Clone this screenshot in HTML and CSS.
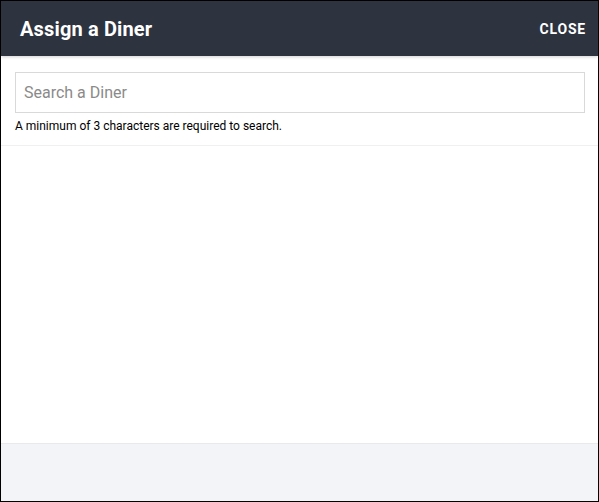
FILE: index.html
```html
<!DOCTYPE html>
<html>
<head>
<meta charset="utf-8">
<link rel="stylesheet" href="styles.css">
</head>
<body>
<div class="modal">
  <header class="modal-header">
    <h1 class="title">Assign a Diner</h1>
    <button class="close">CLOSE</button>
  </header>
  <div class="search-area">
    <input class="search-input" type="text" placeholder="Search a Diner">
    <p class="hint">A minimum of 3 characters are required to search.</p>
  </div>
  <div class="results"></div>
  <footer class="modal-footer"></footer>
</div>
</body>
</html>
```
FILE: styles.css
```css
* { box-sizing: border-box; }
html, body { margin: 0; padding: 0; }
body { font-family: Roboto, "Liberation Sans", Arial, sans-serif; background: #fff; }
.modal {
  width: 599px;
  height: 502px;
  border: 1px solid #000;
  display: flex;
  flex-direction: column;
  background: #fff;
}
.modal-header {
  height: 55px;
  background: #2d333f;
  display: flex;
  align-items: center;
  justify-content: space-between;
  padding: 0 12px 0 19px;
  box-shadow: 0 1px 3px rgba(0,0,0,0.18);
  position: relative;
  z-index: 1;
  flex: none;
}
.title {
  margin: 0;
  color: #fff;
  font-size: 20px;
  font-weight: 700;
  letter-spacing: 0.15px;
}
.close {
  background: none;
  border: 0;
  padding: 0;
  color: #fff;
  font-family: inherit;
  font-size: 14px;
  font-weight: 700;
  letter-spacing: 0.8px;
  cursor: pointer;
}
.search-area {
  padding: 16px 13px 12px 14px;
  border-bottom: 1px solid #f0f0f0;
  flex: none;
}
.search-input {
  display: block;
  width: 100%;
  height: 41px;
  border: 1px solid #d9d9d9;
  padding: 0 8px;
  font-family: inherit;
  font-size: 16px;
  color: #333;
  outline: none;
}
.search-input::placeholder { color: #8a8a8a; }
.hint {
  margin: 6px 0 0 0;
  font-size: 12px;
  line-height: 14px;
  color: #000;
}
.results { flex: 1; }
.modal-footer {
  height: 58px;
  background: #f3f4f8;
  border-top: 1px solid #e9e9ec;
  flex: none;
}
```
